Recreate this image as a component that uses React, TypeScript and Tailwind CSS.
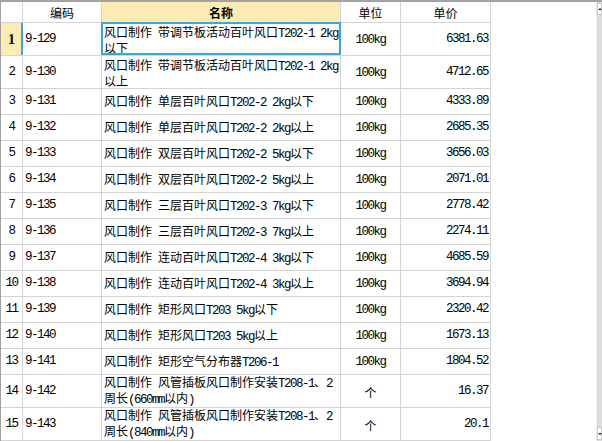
import React from "react";

type Row = { n: number; code: string; name: string[]; unit: string; price: string };

const rows: Row[] = [
  { n: 1, code: "9-129", name: ["风口制作 带调节板活动百叶风口T202-1 2kg", "以下"], unit: "100kg", price: "6381.63" },
  { n: 2, code: "9-130", name: ["风口制作 带调节板活动百叶风口T202-1 2kg", "以上"], unit: "100kg", price: "4712.65" },
  { n: 3, code: "9-131", name: ["风口制作 单层百叶风口T202-2 2kg以下"], unit: "100kg", price: "4333.89" },
  { n: 4, code: "9-132", name: ["风口制作 单层百叶风口T202-2 2kg以上"], unit: "100kg", price: "2685.35" },
  { n: 5, code: "9-133", name: ["风口制作 双层百叶风口T202-2 5kg以下"], unit: "100kg", price: "3656.03" },
  { n: 6, code: "9-134", name: ["风口制作 双层百叶风口T202-2 5kg以上"], unit: "100kg", price: "2071.01" },
  { n: 7, code: "9-135", name: ["风口制作 三层百叶风口T202-3 7kg以下"], unit: "100kg", price: "2778.42" },
  { n: 8, code: "9-136", name: ["风口制作 三层百叶风口T202-3 7kg以上"], unit: "100kg", price: "2274.11" },
  { n: 9, code: "9-137", name: ["风口制作 连动百叶风口T202-4 3kg以下"], unit: "100kg", price: "4685.59" },
  { n: 10, code: "9-138", name: ["风口制作 连动百叶风口T202-4 3kg以上"], unit: "100kg", price: "3694.94" },
  { n: 11, code: "9-139", name: ["风口制作 矩形风口T203 5kg以下"], unit: "100kg", price: "2320.42" },
  { n: 12, code: "9-140", name: ["风口制作 矩形风口T203 5kg以上"], unit: "100kg", price: "1673.13" },
  { n: 13, code: "9-141", name: ["风口制作 矩形空气分布器T206-1"], unit: "100kg", price: "1804.52" },
  { n: 14, code: "9-142", name: ["风口制作 风管插板风口制作安装T208-1、2", "周长(660mm以内)"], unit: "个", price: "16.37" },
  { n: 15, code: "9-143", name: ["风口制作 风管插板风口制作安装T208-1、2", "周长(840mm以内)"], unit: "个", price: "20.1" },
];

function T({ s }: { s: string }) {
  const parts = s.match(/[\x00-\x7f]+|[^\x00-\x7f]+/g) || [];
  return (
    <>
      {parts.map((p, i) =>
        /^[\x00-\x7f]+$/.test(p) ? (
          <span key={i} className="font-['Liberation_Mono',monospace] text-[12.5px] tracking-[-1.5px] whitespace-pre">
            {p}
          </span>
        ) : (
          <span key={i}>{p}</span>
        )
      )}
    </>
  );
}

const cell = "border-r border-b border-[#d4d4d4] flex items-center";

export default function App() {
  return (
    <div className="w-[602px] h-[441px] overflow-hidden bg-white border-t-2 border-[#a3a3a3] flex text-[12px] leading-[13px] text-black font-['Noto_Sans_CJK_SC',sans-serif]">
      <div className="flex-1 border-l border-[#a0a0a0]">
        <div className="grid grid-cols-[22px_79px_239px_60px_90px]">
          <div className={`${cell} h-[21px]`} />
          <div className={`${cell} h-[21px] justify-center`}>编码</div>
          <div className={`${cell} h-[21px] justify-center bg-[#fdebb4] font-bold`}>名称</div>
          <div className={`${cell} h-[21px] justify-center`}>单位</div>
          <div className={`${cell} h-[21px] justify-center`}>单价</div>
          {rows.map((r) => {
            const h = r.name.length > 1 ? "h-[33px]" : "h-[26px]";
            const sel = r.n === 1;
            return (
              <React.Fragment key={r.n}>
                <div className={`${cell} ${h} justify-center relative ${sel ? "bg-[#fdebb4]" : ""}`}>
                  {sel ? (
                    <span className="font-['Liberation_Serif',serif] font-bold text-[14px]">1</span>
                  ) : (
                    <T s={String(r.n)} />
                  )}
                  {sel && <div className="absolute right-[-1px] top-0 bottom-0 w-[2px] bg-[#3ea6d4]" />}
                </div>
                <div className={`${cell} ${h} pl-[2px]`}>
                  <T s={r.code} />
                </div>
                <div className={`${cell} ${h} pl-[2px] relative`}>
                  <div className="flex flex-col whitespace-nowrap">
                    {r.name.map((l, i) => (
                      <div key={i}>
                        <T s={l} />
                      </div>
                    ))}
                  </div>
                  {sel && <div className="absolute -left-px -top-px -right-px bottom-0 border-2 border-[#3ea6d4]" />}
                </div>
                <div className={`${cell} ${h} justify-center pt-[2px]`}>
                  <T s={r.unit} />
                </div>
                <div className={`${cell} ${h} justify-end pr-[2px]`}>
                  <T s={r.price} />
                </div>
              </React.Fragment>
            );
          })}
        </div>
      </div>
      <div className="w-[6px] bg-[#dcdcdc] flex flex-col justify-between border-l border-[#ececec]">
        <div className="mt-[1px] h-[12px] bg-white border border-[#c8c8c8] flex items-center justify-center">
          <div className="w-0 h-0 border-l-[2px] border-r-[2px] border-b-[2px] border-l-transparent border-r-transparent border-b-[#333]" />
        </div>
        <div className="mb-[1px] h-[13px] bg-white border border-[#c8c8c8] flex items-center justify-center">
          <div className="w-0 h-0 border-l-[2px] border-r-[2px] border-t-[2px] border-l-transparent border-r-transparent border-t-[#333]" />
        </div>
      </div>
    </div>
  );
}
